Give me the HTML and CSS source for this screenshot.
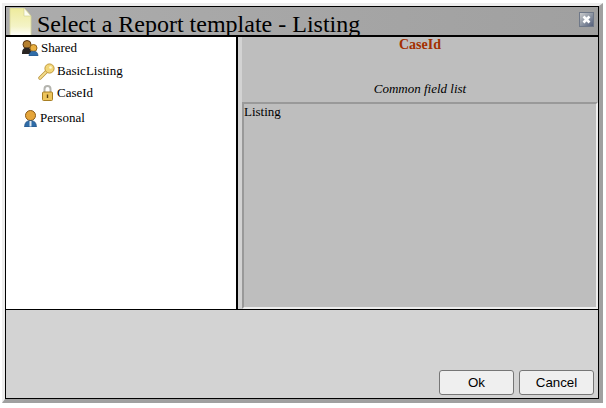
FILE: index.html
```html
<!DOCTYPE html>
<html>
	<head>
		<meta charset="utf-8" />
		<title>Select a Report template - Listing</title>
		<link rel="stylesheet" href="styles.css">
	</head>
	<body>
		<div id="dialog">
			<div id="top">
				<svg class="doc" width="23" height="28" viewBox="0 0 23 28">
					<defs>
						<linearGradient id="paper" x1="0" y1="0" x2="0" y2="1">
							<stop offset="0" stop-color="#eeeb9c"/>
							<stop offset="0.65" stop-color="#f4f3c6"/>
							<stop offset="1" stop-color="#ffffff"/>
						</linearGradient>
					</defs>
					<path d="M1 0H15L22 8V28H1Z" fill="url(#paper)" stroke="#d8d79a" stroke-width="0.8"/>
					<path d="M15 0V8H22Z" fill="#fdfdf0" stroke="#cfcd8e" stroke-width="0.6"/>
				</svg>
				<span class="title">Select a Report template - Listing</span>
				<svg class="close" width="15" height="15" viewBox="0 0 15 15">
					<defs>
						<linearGradient id="closebg" x1="0" y1="0" x2="1" y2="1">
							<stop offset="0" stop-color="#cfcfcf"/>
							<stop offset="0.5" stop-color="#8f97a4"/>
							<stop offset="1" stop-color="#4f5a78"/>
						</linearGradient>
					</defs>
					<rect x="0.5" y="0.5" width="14" height="14" fill="url(#closebg)" stroke="#6f7888"/>
					<path d="M4.500 4.500L10.500 10.500M10.500 4.500L4.500 10.500" stroke="#fff" stroke-width="2.600"/>
				</svg>
			</div>
			<div id="main">
				<div id="tree">
					<div class="node shared">
						<svg width="17" height="16" viewBox="0 0 17 16">
							<circle cx="5" cy="4.500" r="4" fill="#b5802f" stroke="#5a3510"/>
							<path d="M0 13Q0 7.500 5 7.500Q9 7.500 9.500 12V14H0Z" fill="#2a2522"/>
							<circle cx="11.500" cy="8" r="3.500" fill="#eab040" stroke="#94661a"/>
							<path d="M7 16Q7 11.200 11.500 11.200Q16 11.200 16 16Z" fill="#2f6ca8" stroke="#1d4a78" stroke-width="0.600"/>
						</svg>
						<span>Shared</span>
					</div>
					<div class="node key">
						<svg width="17" height="17" viewBox="0 0 17 17">
							<path d="M9 8L2 15" stroke="#b8923a" stroke-width="3.400" stroke-linecap="round"/>
							<path d="M9 8L2 15" stroke="#f3dc8c" stroke-width="1.800" stroke-linecap="round"/>
							<circle cx="11.500" cy="5.500" r="4.600" fill="#f2d678" stroke="#c29a3c"/>
							<circle cx="12.500" cy="4.500" r="1.300" fill="#fff8d8"/>
						</svg>
						<span>BasicListing</span>
					</div>
					<div class="node lock">
						<svg width="13" height="16" viewBox="0 0 13 16">
							<path d="M3.500 8V4Q3.500 1 6.500 1Q9.500 1 9.500 4V8" fill="none" stroke="#b4b4ae" stroke-width="2"/>
							<rect x="1.500" y="7" width="10" height="8.500" rx="1" fill="#edc55c" stroke="#a87f24"/>
							<path d="M6.500 9.500V13" stroke="#5a4010" stroke-width="1.400"/>
						</svg>
						<span>CaseId</span>
					</div>
					<div class="node person">
						<svg width="15" height="17" viewBox="0 0 15 17">
							<circle cx="7.500" cy="5.500" r="5" fill="#e5a53a" stroke="#8a5a18"/>
							<path d="M1.500 17Q1.500 10.500 7.500 10.500Q13.500 10.500 13.500 17Z" fill="#2f6ca8" stroke="#1d4a78" stroke-width="0.600"/>
							<path d="M6.500 11H8.500V16.500H6.500Z" fill="#dfe8f0"/>
						</svg>
						<span>Personal</span>
					</div>
				</div>
				<div id="detail">
					<div class="name">CaseId</div>
					<div class="sub">Common field list</div>
					<div class="fields">Listing</div>
				</div>
			</div>
			<div id="foot">
				<button type="button">Ok</button>
				<button type="button">Cancel</button>
			</div>
		</div>
	</body>
</html>
```

FILE: styles.css
```css
*{margin:0;padding:0;box-sizing:border-box}
html,body{height:100%;background:#fff;overflow:hidden;}
body{font-family:"Liberation Serif",serif;font-size:13px;color:#000;padding:3px 3px 5px 2px;}
#dialog{height:400px;border-style:solid;border-width:3px 4px 4px 3px;border-color:#eee #a0a0a0 #a0a0a0 #eee;
	box-shadow:inset 0 0 0 1px #000;display:flex;flex-direction:column;padding:1px;}
#top{height:30px;flex:none;background:linear-gradient(90deg,#acacac,#a0a0a0);border-bottom:2px solid #000;
	display:flex;align-items:flex-start;overflow:hidden;padding-left:3px;}
.doc{margin-top:1px;flex:none;}
.title{font-size:24px;line-height:28px;margin-left:5px;margin-top:3px;flex:1;white-space:nowrap;}
.close{margin:5px 4px 0 0;flex:none;}
#main{height:273px;flex:none;display:flex;border-bottom:1px solid #000;}
#tree{width:232px;flex:none;background:#fff;border-right:2px solid #000;padding-top:2px;}
.node{display:flex;align-items:center;height:18px;}
.shared{padding-left:16px;}
.shared span{margin-left:2px;}
.key{padding-left:32px;margin-top:5px;}
.key span{margin-left:2px;}
.lock{padding-left:35px;margin-top:4px;}
.lock span{margin-left:3px;}
.person{padding-left:17px;margin-top:7px;}
.person span{margin-left:2px;}
#detail{flex:1;background:#bebebe;border-left:4px solid #d3d3d3;display:flex;flex-direction:column;}
.name{font-size:14px;font-weight:bold;color:#a33000;text-align:center;height:44px;line-height:16px;}
.sub{font-style:italic;text-align:center;line-height:15px;height:21px;}
.fields{flex:1;border-style:solid;border-width:2px;border-color:#999 #eee #eee #999;line-height:15px;}
#foot{flex:1;background:#d3d3d3;display:flex;justify-content:flex-end;align-items:flex-end;gap:5px;padding:0 4px 3px 0;}
#foot button{width:75px;height:25px;font-family:"Liberation Sans",sans-serif;font-size:13.33px;color:#000;
	background:#efefef;border:1px solid #767676;border-radius:3px;}
```
